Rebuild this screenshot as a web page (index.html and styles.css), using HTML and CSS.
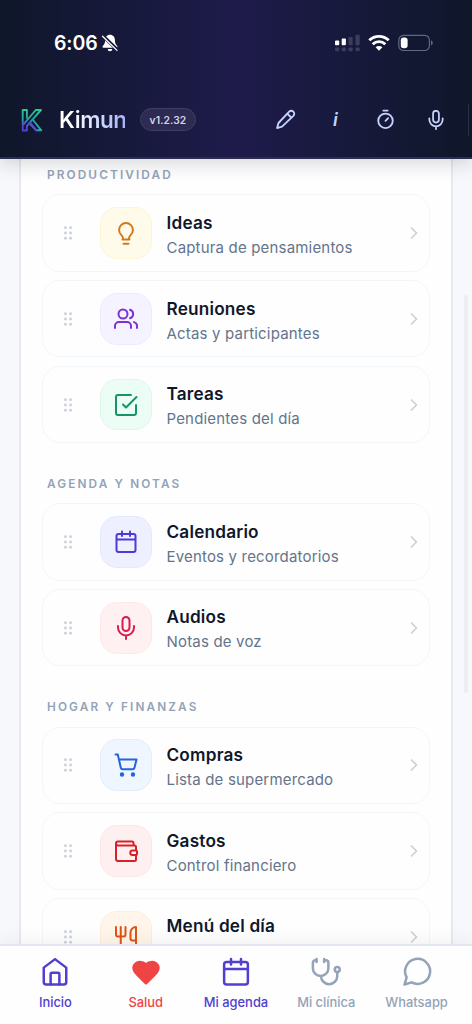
FILE: index.html
```html
<!DOCTYPE html>
<html lang="es">
<head>
<meta charset="utf-8">
<title>Kimun</title>
<link rel="stylesheet" href="styles.css">
</head>
<body>
<svg class="defs" width="0" height="0" aria-hidden="true">
  <symbol id="grip" viewBox="0 0 24 24"><g fill="currentColor" stroke="none"><circle cx="8.6" cy="5" r="1.9"/><circle cx="15.4" cy="5" r="1.9"/><circle cx="8.6" cy="12" r="1.9"/><circle cx="15.4" cy="12" r="1.9"/><circle cx="8.6" cy="19" r="1.9"/><circle cx="15.4" cy="19" r="1.9"/></g></symbol>
  <symbol id="chev" viewBox="0 0 24 24"><path d="m9 18 6-6-6-6"/></symbol>
  <symbol id="mic" viewBox="0 0 24 24"><path d="M12 1a3.500 3.500 0 0 0-3.500 3.500v7a3.500 3.500 0 0 0 7 0v-7A3.500 3.500 0 0 0 12 1z"/><path d="M20 10v1.500a8 8 0 0 1-16 0V10M12 19.500V23"/></symbol>
  <symbol id="cal" viewBox="0 0 24 24"><rect x="2.500" y="4" width="19" height="18" rx="2"/><path d="M16 1.500V6M8 1.500V6M3 9.500h18"/></symbol>
</svg>
<div class="screen">
  <header class="top">
    <div class="status">
      <div class="clock">6:06
        <svg width="18" height="18" viewBox="0 0 18 18"><path d="M9 .8c-3 0-4.900 2.300-4.900 5.200 0 3-.7 4.200-2.300 6-.6.7-.2 1.800.7 1.800h13c.9 0 1.300-1.100.7-1.800-1.600-1.800-2.300-3-2.300-6 0-2.900-1.900-5.200-4.900-5.200z" fill="#fff"/><path d="M6.700 15h4.600a2.300 2.300 0 0 1-4.600 0z" fill="#fff"/><path d="M1.800 1.800 16.500 16" stroke="#17183d" stroke-width="3.400"/><path d="M1.500 2.300 16 16.400" stroke="#fff" stroke-width="1.300" stroke-linecap="round"/></svg>
      </div>
      <div class="signals">
        <svg width="26" height="18" viewBox="0 0 26 18"><g fill="#fff"><rect x="1" y="6.500" width="4.200" height="4.700" rx="1"/><rect x="7.700" y="4.500" width="4.200" height="6.700" rx="1"/></g><g fill="#3c3c60"><rect x="14.500" y="3" width="4.200" height="8.200" rx="1"/><rect x="21.500" y=".8" width="4.200" height="10.400" rx="1"/><rect x="1" y="13.500" width="4.200" height="3.800" rx="1"/><rect x="7.700" y="13.500" width="4.200" height="3.800" rx="1"/><rect x="14.500" y="13.500" width="4.200" height="3.800" rx="1"/><rect x="21.500" y="13.500" width="4.200" height="3.800" rx="1"/></g></svg>
        <svg width="22" height="18" viewBox="0 0 22 18" fill="none" stroke="#fff" stroke-width="2.900"><path d="M1.300 6.300a14 14 0 0 1 19.400 0M4.700 10.200a9 9 0 0 1 12.600 0"/><path d="m11 16.800-3.400-3.500a4.800 4.800 0 0 1 6.800 0z" fill="#fff" stroke="none"/></svg>
        <svg width="36" height="18" viewBox="0 0 36 18"><rect x=".8" y="1.300" width="30.600" height="15.200" rx="4.800" fill="none" stroke="#64667f" stroke-width="1.200"/><rect x="2.800" y="3.500" width="6.800" height="10.800" rx="2.800" fill="#fff"/><path d="M33 6.300c2.300 1 2.300 4.200 0 5.200z" fill="#64667f"/></svg>
      </div>
    </div>
    <div class="bar">
      <svg class="logo" width="22" height="26" viewBox="0 0 22 26"><defs><linearGradient id="lg" x1="0" y1="0" x2="0" y2="1"><stop offset="0" stop-color="#2cc98f"/><stop offset=".5" stop-color="#259aa6"/><stop offset=".75" stop-color="#5540d0"/><stop offset="1" stop-color="#4a45d8"/></linearGradient></defs><g fill="none" stroke-width="1.900" stroke-linejoin="round" stroke-linecap="round"><path stroke="#27aaa0" d="m12 13 8.300 10.300h-5.100L9.500 17"/><path stroke="url(#lg)" d="M5.900 11V3H1.700v20.500h4.200v-4.700L20 3h-5.200L1.700 18.300"/><path stroke="#5942dc" d="M5.900 19 9.500 16l6 7.300"/></g></svg>
      <span class="brand">Kimun</span>
      <span class="version">v1.2.32</span>
      <nav class="tools">
        <svg width="21" height="21" viewBox="0 0 24 24"><path d="M16.200 3a3.300 3.300 0 0 1 4.800 4.800L8 20.200l-5.600 1.600L4 16zM14 5.200l4.800 4.800"/></svg>
        <span class="info">i</span>
        <svg width="21" height="21" viewBox="0 0 24 24"><circle cx="12" cy="13.500" r="8.300"/><path d="M9.500 1.800h5M12 13.500l3-3"/></svg>
        <svg width="20" height="20" viewBox="0 0 24 24"><use href="#mic"/></svg>
      </nav>
    </div>
  </header>
  <main class="content">
    <div class="sheet">
      <section><h2>PRODUCTIVIDAD</h2>
        <article class="card"><svg class="grip"><use href="#grip"/></svg><div class="tile amber"><svg viewBox="0 0 24 24"><path d="M9 17.200c0-1.200-.6-2.100-1.600-3.100a6.900 6.900 0 1 1 9.200 0c-1 1-1.600 1.900-1.600 3.100M8.500 18.500h7M9.500 22.800h5"/></svg></div><div class="copy"><h3>Ideas</h3><p>Captura de pensamientos</p></div><svg class="chev"><use href="#chev"/></svg></article>
        <article class="card"><svg class="grip"><use href="#grip"/></svg><div class="tile violet"><svg viewBox="0 0 24 24"><path d="M17 21v-2a4 4 0 0 0-4-4H5a4 4 0 0 0-4 4v2"/><circle cx="9" cy="7" r="4.500"/><path d="M23 21v-2a4 4 0 0 0-3-3.870M16 2.700a4.500 4.500 0 0 1 0 8.600"/></svg></div><div class="copy"><h3>Reuniones</h3><p>Actas y participantes</p></div><svg class="chev"><use href="#chev"/></svg></article>
        <article class="card"><svg class="grip"><use href="#grip"/></svg><div class="tile green"><svg viewBox="0 0 24 24"><path d="m9 11.500 3 3L22.500 4"/><path d="M22 12v8a2 2 0 0 1-2 2H4a2 2 0 0 1-2-2V4a2 2 0 0 1 2-2h13"/></svg></div><div class="copy"><h3>Tareas</h3><p>Pendientes del día</p></div><svg class="chev"><use href="#chev"/></svg></article>
      </section>
      <section><h2>AGENDA Y NOTAS</h2>
        <article class="card"><svg class="grip"><use href="#grip"/></svg><div class="tile indigo"><svg><use href="#cal"/></svg></div><div class="copy"><h3>Calendario</h3><p>Eventos y recordatorios</p></div><svg class="chev"><use href="#chev"/></svg></article>
        <article class="card"><svg class="grip"><use href="#grip"/></svg><div class="tile rose"><svg><use href="#mic"/></svg></div><div class="copy"><h3>Audios</h3><p>Notas de voz</p></div><svg class="chev"><use href="#chev"/></svg></article>
      </section>
      <section><h2>HOGAR Y FINANZAS</h2>
        <article class="card"><svg class="grip"><use href="#grip"/></svg><div class="tile blue"><svg viewBox="0 0 24 24"><circle cx="8" cy="21.500" r="1.200" fill="currentColor"/><circle cx="19" cy="21.500" r="1.200" fill="currentColor"/><path d="M1.500 1.500h2.300l3 13.200a2 2 0 0 0 2 1.600h9.800a2 2 0 0 0 1.900-1.600L22.500 6.500H5"/></svg></div><div class="copy"><h3>Compras</h3><p>Lista de supermercado</p></div><svg class="chev"><use href="#chev"/></svg></article>
        <article class="card"><svg class="grip"><use href="#grip"/></svg><div class="tile red"><svg viewBox="0 0 24 24"><path d="M19.500 6.500V4a1.500 1.500 0 0 0-1.500-1.500H4a2 2 0 0 0 0 4h16.500A1.500 1.500 0 0 1 22 8v3.500h-3.500a2.200 2.200 0 0 0 0 4.500H22a1 1 0 0 0 1-1v-2.500a1 1 0 0 0-1-1"/><path d="M2 4.500V20a2 2 0 0 0 2 2h16.500a1.500 1.500 0 0 0 1.500-1.500V16"/></svg></div><div class="copy"><h3>Gastos</h3><p>Control financiero</p></div><svg class="chev"><use href="#chev"/></svg></article>
        <article class="card"><svg class="grip"><use href="#grip"/></svg><div class="tile orange"><svg viewBox="0 0 24 24"><path d="M2 2v7.500a2 2 0 0 0 2 2h5.500a2 2 0 0 0 2-2V2M6.750 2v20M22 15.500V2a5.500 5.500 0 0 0-5.500 5.500v6a2 2 0 0 0 2 2zm0 0V22"/></svg></div><div class="copy"><h3>Menú del día</h3><p>&nbsp;</p></div><svg class="chev"><use href="#chev"/></svg></article>
      </section>
    </div>
    <div class="scrollbar"></div>
  </main>
  <nav class="tabs">
    <a class="active"><svg viewBox="0 0 24 24"><path d="M3 8.500 12 1.700l9 6.800V20a2 2 0 0 1-2 2H5a2 2 0 0 1-2-2z"/><path d="M8.500 22v-8.500a1 1 0 0 1 1-1h5a1 1 0 0 1 1 1V22"/></svg>Inicio</a>
    <a class="health"><svg viewBox="0 0 24 24"><path fill="currentColor" d="M19 14c1.500-1.500 3-3.200 3-5.500A5 5 0 0 0 16.500 4c-1.800 0-3 .5-4.500 2-1.500-1.500-2.700-2-4.500-2A5 5 0 0 0 2 8.500c0 2.300 1.500 4 3 5.500l7 7z"/></svg>Salud</a>
    <a class="active"><svg><use href="#cal"/></svg>Mi agenda</a>
    <a><svg viewBox="0 0 24 24"><path d="M10.500 1.500v2.500M4.500 1.500v2.500M4.500 2.500h-1a2 2 0 0 0-2 2V9a6.200 6.200 0 0 0 12.400 0V4.500a2 2 0 0 0-2-2h-1.400M8 15.200a6.300 6.300 0 0 0 13 0V12"/><circle cx="21" cy="10" r="2"/></svg>Mi clínica</a>
    <a><svg viewBox="0 0 24 24"><path d="M7.700 20.300A10 10 0 1 0 3.700 16.300L2 22z"/></svg>Whatsapp</a>
  </nav>
</div>
</body>
</html>
```
FILE: styles.css
```css
* { box-sizing: border-box; }
body { margin: 0; font-family: Inter, sans-serif; background: #f7f8fb; }
h2, h3, p { margin: 0; }
svg { flex: none; }
.defs { position: absolute; }
.screen { height: 1024px; display: flex; flex-direction: column; overflow: hidden; }
.top { height: 159px; flex: none; z-index: 1; background: linear-gradient(90deg, #0f172a 0%, #1e1b4b 50%, #0f172a 100%); border-bottom: 2px solid #2c2d50; box-shadow: 0 4px 18px rgba(15, 23, 42, .18); }
.status { height: 86px; display: flex; justify-content: space-between; padding: 0 38px 0 54px; align-items: center; }
.clock { display: flex; align-items: center; gap: 3px; color: #fff; font-size: 19.500px; font-weight: 600; letter-spacing: -.1px; }
.signals { display: flex; align-items: center; gap: 8px; }
.bar { height: 67px; display: flex; align-items: center; padding-left: 21px; }
.logo { margin-right: 16px; }
.brand { width: 66px; font-size: 22.500px; font-weight: 600; letter-spacing: -.4px; line-height: 28px; background: linear-gradient(90deg, #fff 20%, #a5b4fc); background-clip: text; -webkit-background-clip: text; color: transparent; }
.version { margin-left: 15px; height: 23px; width: 56px; border-radius: 12px; border: 1px solid #403e65; background: #2d2b51; color: #d3d5ec; font-size: 10.300px; font-weight: 600; letter-spacing: .1px; display: flex; align-items: center; justify-content: center; }
.tools { flex: 1; height: 32px; margin-left: 54px; padding-left: 10px; border-right: 1px solid #2b3046; margin-right: 3px; display: grid; grid-template-columns: repeat(4, 50.300px); align-items: center; color: #c7d2fe; justify-items: center; }
.tools svg { fill: none; stroke: currentColor; stroke-width: 2.100; stroke-linecap: round; stroke-linejoin: round; }
.info { font: italic 600 18px Inter, sans-serif; }
.content { flex: 1; min-height: 0; overflow: hidden; display: flex; position: relative; padding: 0 19px; }
.sheet { flex: 1; background: #fefefe; border: solid #e7e9ed; border-width: 0 2px; padding: 0 21px; height: 900px; flex-shrink: 0; }
h2 { font-size: 11.800px; font-weight: 600; line-height: 16px; letter-spacing: 2.120px; color: #94a3b8; padding-left: 5px; margin: 32.600px 0 11.600px; }
section:first-child h2 { margin-top: 7.900px; }
.card { height: 77.200px; border: 1px solid #f3f6f8; border-radius: 18px; display: flex; align-items: center; padding: 0 5px 0 15.500px; background: #fefefe; }
.card + .card { margin-top: 8.600px; }
.grip { width: 18px; height: 20px; color: #cbd0da; }
.tile { width: 51.500px; height: 51.500px; margin: 0 15px 0 23.500px; border: 1px solid; border-radius: 17px; display: grid; place-items: center; }
.tile svg { width: 24px; height: 24px; fill: none; stroke: currentColor; stroke-width: 2; stroke-linecap: round; stroke-linejoin: round; }
.amber { color: #d07a1d; background: #fffbeb; border-color: #fef5d3; }
.violet { color: #7e32d4; background: #f5f3ff; border-color: #efebfe; }
.green { color: #159467; background: #ecfdf5; border-color: #dcf8eb; }
.indigo { color: #4f3ad6; background: #eef0ff; border-color: #e5e9ff; }
.rose { color: #d91c4f; background: #fff0f1; border-color: #ffe8ea; }
.blue { color: #2563dc; background: #eff6ff; border-color: #e2edfe; }
.red { color: #d82029; background: #fef0f1; border-color: #fee6e6; }
.orange { color: #df5415; background: #fff5ea; border-color: #ffeedb; }
.copy { flex: 1; padding-top: 3.400px; }
h3 { font-size: 17.200px; font-weight: 600; line-height: 24px; letter-spacing: .2px; color: #0f172a; }
p { font-size: 15px; line-height: 22px; letter-spacing: .18px; color: #64748b; margin-top: 2px; }
.chev { width: 20px; height: 20px; fill: none; stroke: #cbd0d9; stroke-width: 2; stroke-linecap: round; stroke-linejoin: round; }
.scrollbar { position: absolute; right: 4px; top: 136px; width: 4px; height: 398px; background: #eceef1; border-radius: 2px; }
.tabs { height: 80px; flex: none; z-index: 1; border-top: 2px solid #e2e7ef; background: #fefefe; box-shadow: 0 -4px 18px rgba(15, 23, 42, .05); display: grid; grid-template-columns: repeat(5, 90.300px); justify-content: center; padding-top: 11px; }
.tabs a { display: flex; flex-direction: column; align-items: center; gap: 7.500px; color: #94a3b8; font-size: 12.900px; line-height: 16px; font-weight: 500; }
.tabs svg { width: 30px; height: 30px; fill: none; stroke: currentColor; stroke-width: 2; stroke-linecap: round; stroke-linejoin: round; }
.tabs .active { color: #5140cf; }
.tabs .health { color: #ef4444; }
```
